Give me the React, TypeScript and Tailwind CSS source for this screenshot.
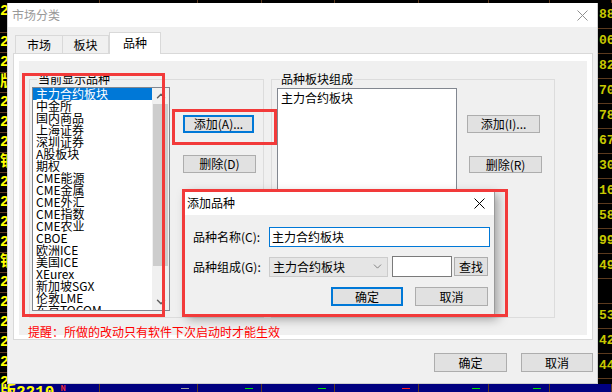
import { ChevronDown, ChevronUp } from "lucide-react";

const leftItems = [
  "主力合约板块",
  "中金所",
  "国内商品",
  "上海证券",
  "深圳证券",
  "A股板块",
  "期权",
  "CME能源",
  "CME金属",
  "CME外汇",
  "CME指数",
  "CME农业",
  "CBOE",
  "欧洲ICE",
  "美国ICE",
  "XEurex",
  "新加坡SGX",
  "伦敦LME",
  "东京TOCOM",
];

// terminal behind the dialog
const leftEdge = ["22", "22", "版", "22", "22", "22", "钢", "22", "22", "22", "22", "钢", "22", "22", "22", "22", "22", "22"];
const rightEdge = ["88", "06", "82", "70", "78", "67", "30", "16", "58", "99", "49", "", "53", "42", "44", "61"];

const stripCells = [
  { w: "w-[100px]", dash: "" },
  { w: "w-[98px]", dash: "bg-[#a0a0a0]" },
  { w: "w-[64px]", dash: "bg-[#00e000]" },
  { w: "w-[73px]", dash: "bg-[#00e000]" },
  { w: "w-[84px]", dash: "bg-[#ff2020]" },
  { w: "w-[70px]", dash: "bg-[#00e000]" },
  { w: "w-[61px]", dash: "bg-[#00e000]" },
  { w: "flex-1", dash: "" },
];

function Btn({
  label,
  className = "",
  focus = false,
}: {
  label: string;
  className?: string;
  focus?: boolean;
}) {
  return (
    <button
      type="button"
      className={`flex items-center justify-center bg-[#e1e1e1] text-[12px] leading-none text-black ${
        focus ? "border-2 border-[#0078d7]" : "border border-[#adadad]"
      } ${className}`}
    >
      {label}
    </button>
  );
}

function CloseX({ className }: { className: string }) {
  return (
    <svg width="11" height="11" viewBox="0 0 11 11" className={className}>
      <path d="M0.5 0.5 L10.5 10.5 M10.5 0.5 L0.5 10.5" stroke="currentColor" strokeWidth="1" fill="none" />
    </svg>
  );
}

export default function App() {
  return (
    <div className="relative h-[392px] w-[612px] overflow-hidden bg-black font-['Noto_Sans_CJK_SC',sans-serif] text-[12px] text-black">
      {/* Top strip of the terminal */}
      <div className="flex h-[3px]">
        {stripCells.map((c, i) => (
          <div key={i} className={`${c.w} h-full border-r border-[#5c3a1e]`} />
        ))}
      </div>

      <div className="flex h-[381px]">
        {/* Left edge of the quote table */}
        <div className="flex w-[7px] flex-col overflow-hidden font-['Liberation_Mono','Noto_Sans_CJK_SC',monospace] text-[15px] font-bold text-[#ffff00]">
          <div className="h-[29px] shrink-0 leading-[18px]">22</div>
          {leftEdge.map((t, i) => (
            <div key={i} className="h-[20px] shrink-0 border-t border-[#5c3a1e] leading-[19px] whitespace-nowrap">
              {t}
            </div>
          ))}
        </div>

        {/* Dialog: 市场分类 */}
        <div className="flex w-[591px] flex-col border-x border-b border-[#cfcfcf] bg-[#f0f0f0]">
          <div className="flex h-[24px] shrink-0 items-center justify-between bg-white pl-[4px] pr-[9px]">
            <span className="text-[12px] text-[#999999]">市场分类</span>
            <CloseX className="text-[#8f8f8f]" />
          </div>

          {/* Tabs */}
          <div className="mt-[5px] ml-[7px] flex h-[21px] items-end">
            <div className="flex h-[18px] w-[48px] items-center justify-center border border-b-0 border-[#d9d9d9] bg-[#f0f0f0]">
              市场
            </div>
            <div className="flex h-[18px] w-[46px] items-center justify-center border-t border-r border-[#d9d9d9] bg-[#f0f0f0]">
              板块
            </div>
            <div className="relative z-10 -mb-[1px] flex h-[22px] w-[52px] items-center justify-center border border-b-0 border-[#d9d9d9] bg-white pb-[2px]">
              品种
            </div>
          </div>

          {/* Tab page */}
          <div className="ml-[5px] h-[287px] w-[580px] border border-[#d9d9d9] bg-white px-[5px] pt-[7px] pb-[4px]">
            <div className="flex h-full flex-col bg-[#f0f0f0]">
              <div className="mt-[18px] ml-[10px] flex">
                {/* 当前显示品种 */}
                <div className="relative h-[239px] w-[235px] border border-[#dcdcdc]">
                  <span className="absolute -top-[9px] left-[7px] bg-[#f0f0f0] px-[1px] leading-[16px]">
                    当前显示品种
                  </span>
                  <div className="flex pt-[7px] pl-[2px]">
                    <div className="flex h-[224px] w-[138px] border border-[#828790] bg-white">
                      <div className="flex-1 overflow-hidden">
                        {leftItems.map((item, i) => (
                          <div
                            key={item}
                            className={`h-[12px] pl-[3px] leading-[12px] whitespace-nowrap ${
                              i === 0 ? "bg-[#0078d7] text-white" : ""
                            }`}
                          >
                            {item}
                          </div>
                        ))}
                      </div>
                      <div className="flex w-[17px] flex-col bg-[#f0f0f0]">
                        <div className="flex h-[16px] items-center justify-center">
                          <ChevronUp size={14} strokeWidth={2.5} className="text-[#606060]" />
                        </div>
                        <div className="mx-[1px] h-[162px] bg-[#cdcdcd]" />
                        <div className="flex-1" />
                        <div className="flex h-[17px] items-center justify-center">
                          <ChevronDown size={14} strokeWidth={2.5} className="text-[#606060]" />
                        </div>
                      </div>
                    </div>
                    <div className="ml-[13px] flex flex-col pt-[28px]">
                      <Btn label="添加(A)..." focus className="h-[18px] w-[71px]" />
                      <Btn label="删除(D)" className="mt-[22px] h-[18px] w-[73px]" />
                    </div>
                  </div>
                </div>

                {/* 品种板块组成 */}
                <div className="relative ml-[7px] h-[239px] w-[284px] border border-[#dcdcdc]">
                  <span className="absolute -top-[9px] left-[8px] bg-[#f0f0f0] px-[1px] leading-[16px]">
                    品种板块组成
                  </span>
                  <div className="flex pt-[8px] pl-[5px]">
                    <div className="h-[223px] w-[180px] border border-[#828790] bg-white pt-[1px] pl-[3px] leading-[16px]">
                      主力合约板块
                    </div>
                    <div className="ml-[10px] flex flex-col pt-[27px]">
                      <Btn label="添加(I)..." className="h-[18px] w-[73px]" />
                      <Btn label="删除(R)" className="mt-[23px] ml-[2px] h-[17px] w-[73px]" />
                    </div>
                  </div>
                </div>
              </div>

              <p className="mt-[6px] ml-[9px] leading-[16px] text-[#ff0000]">
                提醒：所做的改动只有软件下次启动时才能生效
              </p>
            </div>
          </div>

          {/* Dialog buttons */}
          <div className="mt-[13px] flex justify-end gap-[14px] pr-[4px]">
            <Btn label="确定" className="h-[19px] w-[73px]" />
            <Btn label="取消" className="h-[19px] w-[72px]" />
          </div>
        </div>

        {/* Right edge of the quote table */}
        <div className="flex w-[14px] flex-col overflow-hidden font-['Liberation_Mono',monospace] text-[13px] font-bold text-[#c8c800]">
          {rightEdge.map((t, i) => (
            <div
              key={i}
              className={`h-[25px] shrink-0 pl-[1px] leading-[23px] whitespace-nowrap ${
                i === 0 ? "" : "border-t border-[#5c3a1e]"
              }`}
            >
              {t}
            </div>
          ))}
        </div>
      </div>

      {/* Bottom status strip */}
      <div className="flex h-[8px] overflow-hidden bg-[#000080]">
        {stripCells.map((c, i) => (
          <div key={i} className={`${c.w} relative flex h-full justify-end border-r border-[#5c3a1e] pr-[8px]`}>
            {i === 0 && (
              <div className="absolute top-[0px] left-0 flex items-start whitespace-nowrap">
                <span className="font-['Liberation_Mono','Noto_Sans_CJK_SC',monospace] text-[16px] leading-[18px] font-bold text-[#ffff00]">
                  版2210
                </span>
                <span className="ml-[6px] text-[7px] leading-[8px] font-bold text-[#ff3030]">N</span>
              </div>
            )}
            {c.dash && <div className={`mt-[4px] h-[1px] w-[8px] ${c.dash}`} />}
          </div>
        ))}
      </div>

      {/* Dialog: 添加品种 */}
      <div className="absolute top-[190px] left-[184px] flex h-[125px] w-[311px] flex-col border border-[#9a9a9a] bg-[#f0f0f0] shadow-[3px_4px_10px_rgba(0,0,0,0.35)]">
        <div className="flex h-[24px] shrink-0 items-center justify-between bg-white pl-[2px] pr-[9px]">
          <span>添加品种</span>
          <CloseX className="text-black" />
        </div>
        <div className="mt-[12px] flex items-center pl-[8px]">
          <span className="w-[76px] whitespace-nowrap">品种名称(C):</span>
          <div className="flex h-[20px] w-[221px] items-center border border-[#0078d7] bg-white pl-[2px]">
            主力合约板块
          </div>
        </div>
        <div className="mt-[9px] flex items-center pl-[8px]">
          <span className="w-[76px] whitespace-nowrap">品种组成(G):</span>
          <div className="flex h-[20px] w-[119px] items-center justify-between border border-[#cccccc] bg-[#e5e5e5] pr-[3px] pl-[3px]">
            <span>主力合约板块</span>
            <ChevronDown size={13} strokeWidth={1.25} className="text-[#555555]" />
          </div>
          <div className="ml-[4px] h-[21px] w-[60px] border border-[#7a7a7a] bg-white" />
          <Btn label="查找" className="ml-[2px] h-[19px] w-[34px]" />
        </div>
        <div className="mt-[10px] flex gap-[12px] pl-[146px]">
          <Btn label="确定" focus className="h-[19px] w-[72px]" />
          <Btn label="取消" className="h-[19px] w-[73px]" />
        </div>
      </div>

      {/* Red annotation frames */}
      <div className="absolute top-[73px] left-[22px] h-[244px] w-[143px] border-[3px] border-[#f23a3a]" />
      <div className="absolute top-[109px] left-[172px] h-[36px] w-[105px] border-[3px] border-[#f23a3a]" />
      <div className="absolute top-[189px] left-[182px] h-[128px] w-[326px] border-[3px] border-[#f23a3a]" />
    </div>
  );
}
